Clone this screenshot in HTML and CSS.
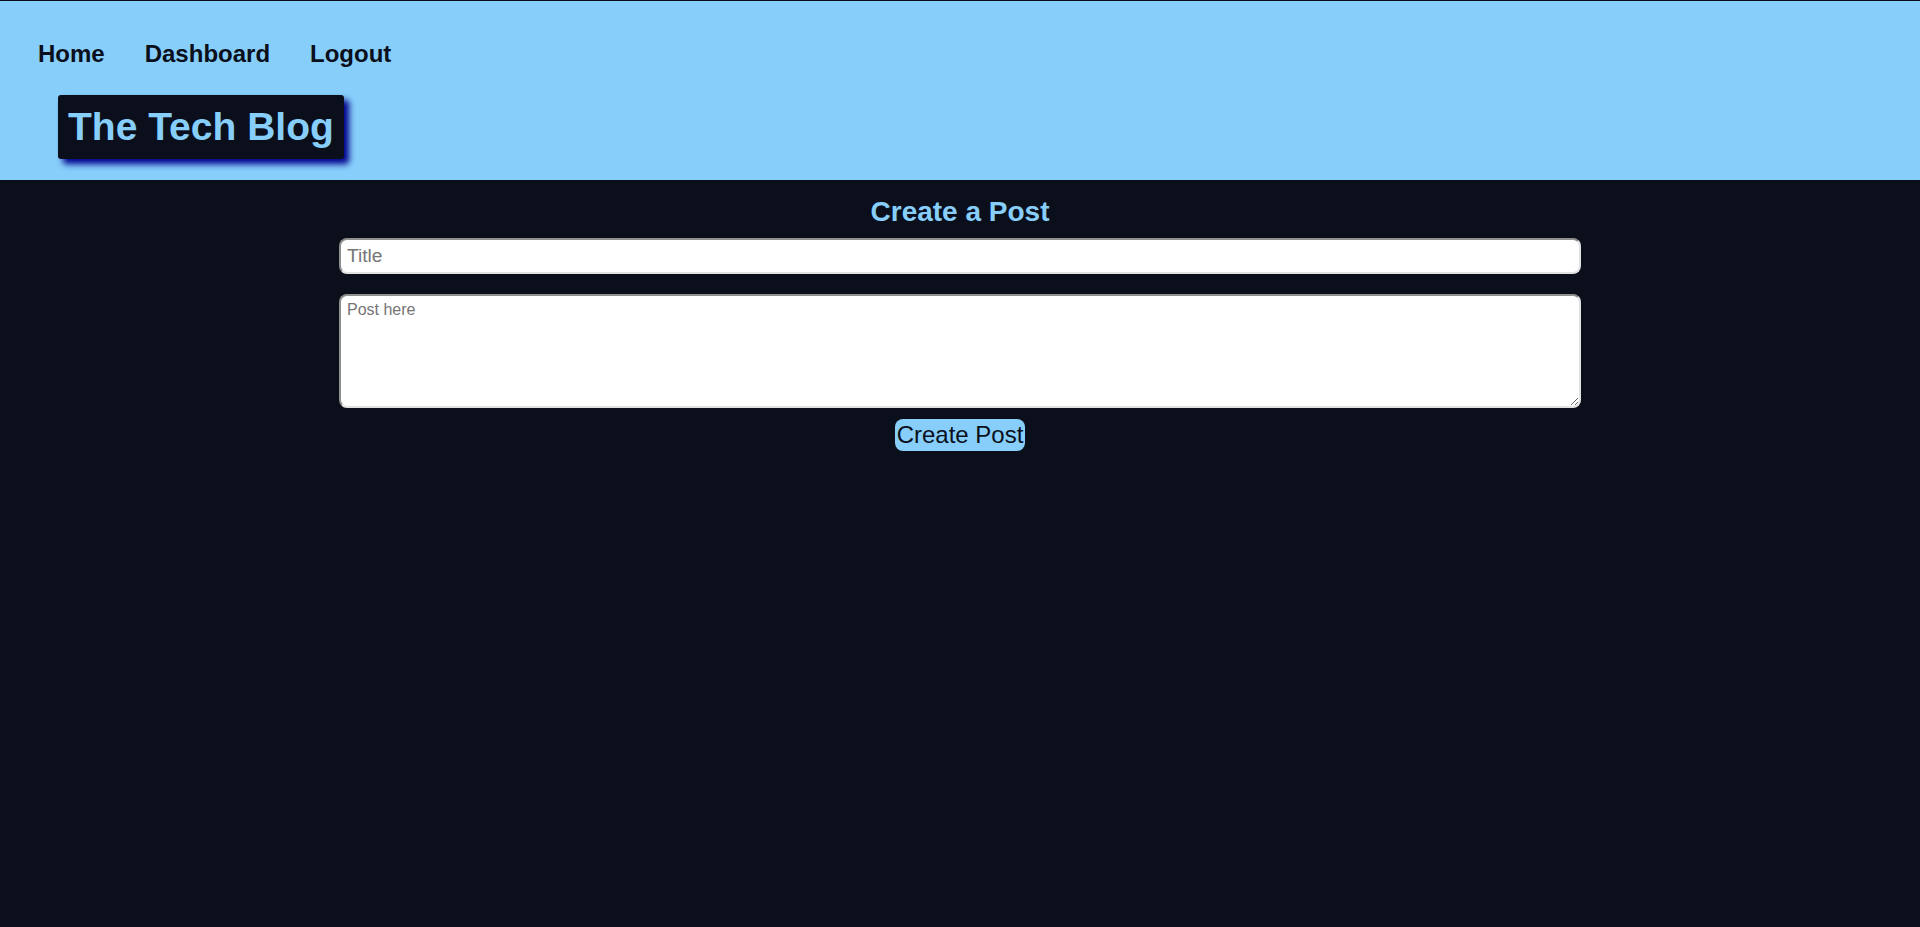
FILE: index.html
```html
<!DOCTYPE html>
<html lang="en">
<head>
<meta charset="utf-8">
<title>The Tech Blog</title>
<link rel="stylesheet" href="styles.css">
</head>
<body>
<header class="site-header">
  <nav class="nav">
    <a class="nav-link" href="#">Home</a>
    <a class="nav-link" href="#">Dashboard</a>
    <a class="nav-link" href="#">Logout</a>
  </nav>
  <div class="logo-row">
    <h1 class="logo">The Tech Blog</h1>
  </div>
</header>
<main class="main">
  <h2 class="form-title">Create a Post</h2>
  <form class="post-form">
    <input class="title-input" type="text" placeholder="Title">
    <textarea class="body-input" placeholder="Post here"></textarea>
    <button class="submit-btn" type="submit">Create Post</button>
  </form>
</main>
</body>
</html>
```
FILE: styles.css
```css
html, body {
  margin: 0;
  padding: 0;
}
body {
  background: #0a0f1b;
  font-family: "Liberation Sans", Arial, sans-serif;
  min-height: 927px;
}
.site-header {
  background: #87cefa;
  border-top: 1px solid #0a0f1b;
  padding: 39px 0 21px 38px;
}
.nav {
  display: flex;
  gap: 40px;
  line-height: normal;
}
.nav-link {
  color: #0a0f1b;
  text-decoration: none;
  font-weight: bold;
  font-size: 24px;
}
.logo-row {
  display: flex;
  margin-top: 27px;
  padding-left: 20px;
}
.logo {
  margin: 0;
  background: #0a0f1b;
  color: #87cefa;
  font-size: 39px;
  font-weight: bold;
  line-height: 44px;
  padding: 10px;
  border-radius: 3px;
  box-shadow: 5px 5px 6px #00008b;
}
.main {
  display: flex;
  flex-direction: column;
  align-items: center;
  padding-top: 16px;
}
.form-title {
  margin: 0 0 10px;
  color: #87cefa;
  font-size: 28px;
  font-weight: bold;
  line-height: normal;
}
.post-form {
  width: 1242px;
  display: flex;
  flex-direction: column;
  align-items: center;
}
.title-input,
.body-input {
  box-sizing: border-box;
  width: 100%;
  background: #fff;
  font-family: "Liberation Sans", Arial, sans-serif;
  border-style: solid;
  border-width: 2px;
  border-color: #8f8f8f #e2e2e2 #e2e2e2 #8f8f8f;
  border-radius: 8px;
  padding: 5px 6px;
  margin: 0;
  outline: none;
}
.title-input {
  height: 36px;
  font-size: 19.2px;
}
.body-input {
  height: 114px;
  margin-top: 20px;
  font-size: 16px;
  padding: 5px 6px;
  display: block;
}
.title-input::placeholder,
.body-input::placeholder {
  color: #757575;
}
.submit-btn {
  margin-top: 11px;
  background: #87cefa;
  color: #0a0f1b;
  border: none;
  border-radius: 8px;
  font-family: "Liberation Sans", Arial, sans-serif;
  font-size: 24px;
  line-height: normal;
  padding: 2px;
}
```
